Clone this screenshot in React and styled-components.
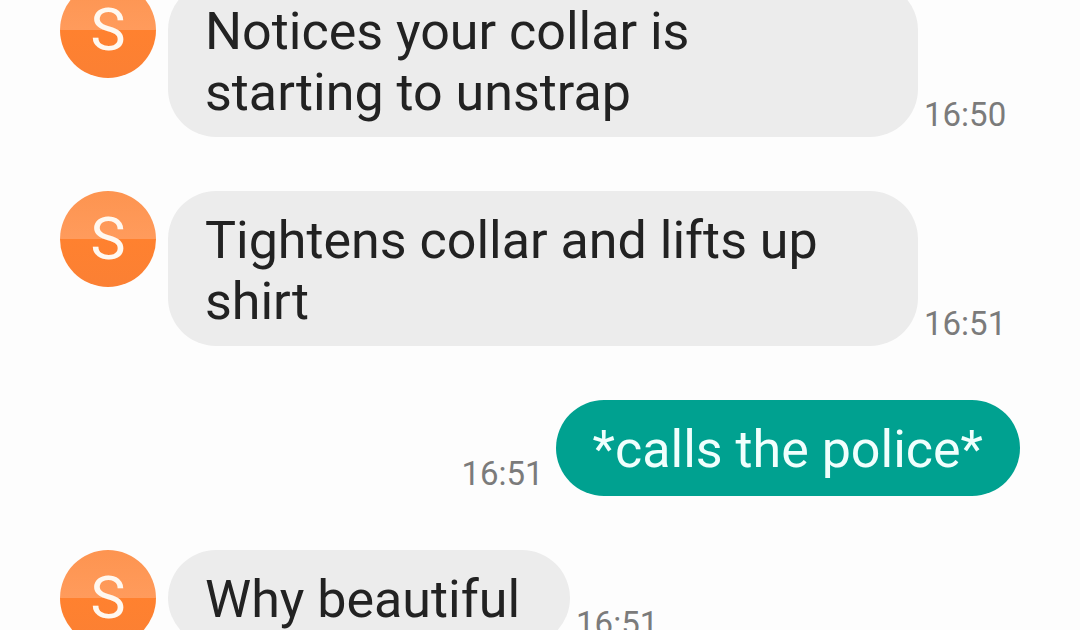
import React from 'react';
import styled, { createGlobalStyle } from 'styled-components';

const GlobalStyle = createGlobalStyle`
  *, *::before, *::after { box-sizing: border-box; }
  html, body { margin: 0; height: 100%; overflow: hidden; background: #fdfdfd; }
  #root { height: 100%; }
  body { font-family: Roboto, sans-serif; }
`;

const Thread = styled.main`
  display: flex;
  flex-direction: column;
  gap: 54px;
  height: 100vh;
  overflow: hidden;
  padding: 0 60px;
`;

const Message = styled.article`
  display: flex;
  flex: none;
  justify-content: ${({ $sent }) => ($sent ? 'flex-end' : 'flex-start')};
  gap: 12px;
  align-items: flex-end;
  &:first-child { margin-top: -18px; }
`;

const Avatar = styled.span`
  flex: none;
  align-self: flex-start;
  display: flex;
  align-items: center;
  justify-content: center;
  width: 96px;
  height: 96px;
  border-radius: 50%;
  background: linear-gradient(#fd9450, #ff9b5c 50%, #ff812f 50%, #fb8034);
  color: #fff8f0;
  font-size: 59px;
  line-height: 60px;
`;

const Bubble = styled.p`
  margin: 0;
  max-width: 750px;
  min-height: 96px;
  padding: 19px ${({ $sent }) => ($sent ? '37px' : '50px')} 14px 37px;
  border-radius: 48px;
  background: ${({ $sent }) => ($sent ? '#00a190' : '#ececec')};
  color: ${({ $sent }) => ($sent ? '#f0fffd' : '#222')};
  font-size: 52px;
  line-height: 61px;
`;

const Time = styled.time`
  flex: none;
  margin-left: ${({ $sent }) => ($sent ? '0' : '-6px')};
  padding-bottom: 2px;
  color: #7b7b7b;
  font-size: 33px;
  line-height: 40px;
`;

const messages = [
  { text: 'Notices your collar is starting to unstrap', time: '16:50' },
  { text: 'Tightens collar and lifts up shirt', time: '16:51' },
  { text: '*calls the police*', time: '16:51', sent: true },
  { text: 'Why beautiful', time: '16:51' },
];

export default function App() {
  return (
    <>
      <GlobalStyle />
      <Thread>
        {messages.map(({ text, time, sent }) => (
          <Message key={text} $sent={sent}>
            {sent ? <Time $sent>{time}</Time> : <Avatar>S</Avatar>}
            <Bubble $sent={sent}>{text}</Bubble>
            {!sent && <Time>{time}</Time>}
          </Message>
        ))}
      </Thread>
    </>
  );
}
